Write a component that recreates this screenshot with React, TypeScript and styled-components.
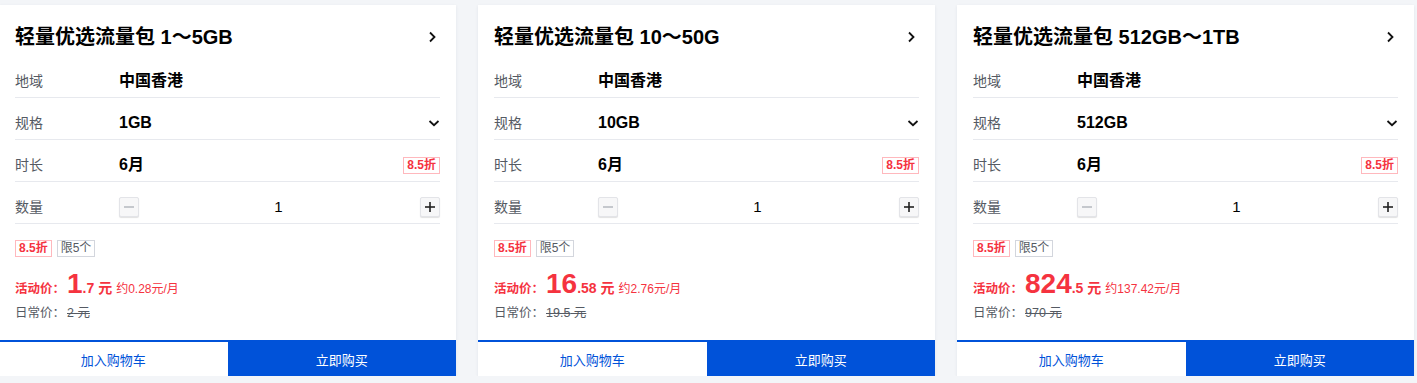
import React from "react";
import styled, { createGlobalStyle } from "styled-components";

type Pack = {
  title: string;
  spec: string;
  whole: string;
  cents: string;
  monthly: string;
  regular: string;
};

const packs: Pack[] = [
  { title: "轻量优选流量包 1～5GB", spec: "1GB", whole: "1", cents: ".7", monthly: "约0.28元/月", regular: "2" },
  { title: "轻量优选流量包 10～50G", spec: "10GB", whole: "16", cents: ".58", monthly: "约2.76元/月", regular: "19.5" },
  { title: "轻量优选流量包 512GB～1TB", spec: "512GB", whole: "824", cents: ".5", monthly: "约137.42元/月", regular: "970" },
];

const GlobalStyle = createGlobalStyle`
  html, body {
    margin: 0;
    padding: 0;
    background: #f3f5f8;
  }
  body {
    font-family: "Liberation Sans", "Noto Sans CJK SC", sans-serif;
    color: #000;
  }
  * { box-sizing: border-box; }
`;

const Page = styled.div`
  display: grid;
  grid-template-columns: repeat(3, 457px);
  gap: 22px;
  padding-top: 5px;
  margin-left: -1px;
`;

const Card = styled.div`
  background: #fff;
  box-shadow: 0 1px 3px rgba(20, 40, 80, 0.08);
  display: flex;
  flex-direction: column;
`;

const Body = styled.div`
  padding: 0 16px 0 16px;
  flex: 1;
`;

const Header = styled.div`
  display: flex;
  align-items: center;
  justify-content: space-between;
  padding: 19px 3px 7px 0;
  height: 51px;
`;

const Title = styled.h3`
  margin: 0;
  font-size: 20px;
  font-weight: 700;
  line-height: 24px;
  color: #000;
`;

const Row = styled.div`
  display: flex;
  align-items: center;
  height: 42px;
  padding: 15px 0 6px;
  border-bottom: 1px solid #e7e9ee;
`;

const Label = styled.div`
  width: 104px;
  flex: none;
  font-size: 14px;
  line-height: 20px;
  color: #555a63;
`;

const Value = styled.div`
  flex: 1;
  font-size: 16px;
  font-weight: 700;
  line-height: 20px;
  color: #000;
`;

const Tag = styled.span<{ $tone?: "red" | "gray" }>`
  display: inline-flex;
  align-items: center;
  height: 17px;
  padding: 0 3px;
  font-size: 12px;
  line-height: 15px;
  font-weight: ${(p) => (p.$tone === "gray" ? 400 : 700)};
  color: ${(p) => (p.$tone === "gray" ? "#555a63" : "#f5333f")};
  border: 1px solid ${(p) => (p.$tone === "gray" ? "#d3d6dd" : "#ffb8bd")};
  background: #fff;
`;

const Stepper = styled.div`
  flex: 1;
  display: flex;
  align-items: center;
  justify-content: space-between;
`;

const StepButton = styled.button<{ $disabled?: boolean }>`
  width: 20px;
  height: 20px;
  padding: 0;
  display: flex;
  align-items: center;
  justify-content: center;
  background: #f7f7f8;
  border: 1px solid #e3e4e8;
  border-radius: 2px;
  box-shadow: 0 1px 1px rgba(0, 0, 0, 0.12);
  color: ${(p) => (p.$disabled ? "#b9bcc2" : "#222")};
`;

const Count = styled.span`
  font-size: 15px;
  line-height: 20px;
  color: #000;
  margin-right: 2px;
`;

const Tags = styled.div`
  display: flex;
  gap: 5px;
  padding-top: 16px;
`;

const PriceLine = styled.div`
  display: flex;
  align-items: baseline;
  margin-top: 14px;
  color: #f5333f;
  height: 26px;
`;

const PriceLabel = styled.span`
  font-size: 12.5px;
  font-weight: 700;
  margin-right: 2px;
`;

const Whole = styled.span`
  font-size: 28px;
  font-weight: 700;
  line-height: 26px;
`;

const Cents = styled.span`
  font-size: 14px;
  font-weight: 700;
  margin-right: 4px;
`;

const Monthly = styled.span`
  font-size: 12px;
`;

const Regular = styled.div`
  margin-top: 8px;
  font-size: 12.5px;
  line-height: 16px;
  color: #555a63;
  span {
    margin-left: 2px;
    text-decoration: line-through;
  }
`;

const Actions = styled.div`
  display: grid;
  grid-template-columns: 1fr 1fr;
  height: 36px;
  margin-top: 19px;
`;

const ActionButton = styled.button<{ $primary?: boolean }>`
  border: none;
  border-top: 2px solid #0052d9;
  font-family: inherit;
  font-size: 13px;
  cursor: pointer;
  background: ${(p) => (p.$primary ? "#0052d9" : "#fff")};
  color: ${(p) => (p.$primary ? "#fff" : "#0052d9")};
`;

const ChevronRight = () => (
  <svg width="10" height="12" viewBox="0 0 10 12" fill="none">
    <path d="M3 1.5 L7.5 6 L3 10.5" stroke="#111" strokeWidth="1.8" />
  </svg>
);

const ChevronDown = () => (
  <svg width="12" height="10" viewBox="0 0 12 10" fill="none">
    <path d="M1.5 3 L6 7.2 L10.5 3" stroke="#111" strokeWidth="1.8" />
  </svg>
);

const Minus = () => (
  <svg width="10" height="10" viewBox="0 0 10 10">
    <rect x="0" y="4.2" width="10" height="1.6" fill="currentColor" />
  </svg>
);

const Plus = () => (
  <svg width="10" height="10" viewBox="0 0 10 10">
    <rect x="0" y="4.2" width="10" height="1.6" fill="currentColor" />
    <rect x="4.2" y="0" width="1.6" height="10" fill="currentColor" />
  </svg>
);

function PackCard({ pack }: { pack: Pack }) {
  return (
    <Card>
      <Body>
        <Header>
          <Title>{pack.title}</Title>
          <ChevronRight />
        </Header>
        <Row>
          <Label>地域</Label>
          <Value>中国香港</Value>
        </Row>
        <Row>
          <Label>规格</Label>
          <Value>{pack.spec}</Value>
          <ChevronDown />
        </Row>
        <Row>
          <Label>时长</Label>
          <Value>6月</Value>
          <Tag>8.5折</Tag>
        </Row>
        <Row>
          <Label>数量</Label>
          <Stepper>
            <StepButton $disabled>
              <Minus />
            </StepButton>
            <Count>1</Count>
            <StepButton>
              <Plus />
            </StepButton>
          </Stepper>
        </Row>
        <Tags>
          <Tag>8.5折</Tag>
          <Tag $tone="gray">限5个</Tag>
        </Tags>
        <PriceLine>
          <PriceLabel>活动价：</PriceLabel>
          <Whole>{pack.whole}</Whole>
          <Cents>{pack.cents} 元</Cents>
          <Monthly>{pack.monthly}</Monthly>
        </PriceLine>
        <Regular>
          日常价：<span>{pack.regular} 元</span>
        </Regular>
      </Body>
      <Actions>
        <ActionButton>加入购物车</ActionButton>
        <ActionButton $primary>立即购买</ActionButton>
      </Actions>
    </Card>
  );
}

export default function App() {
  return (
    <>
      <GlobalStyle />
      <Page>
        {packs.map((p) => (
          <PackCard key={p.title} pack={p} />
        ))}
      </Page>
    </>
  );
}
